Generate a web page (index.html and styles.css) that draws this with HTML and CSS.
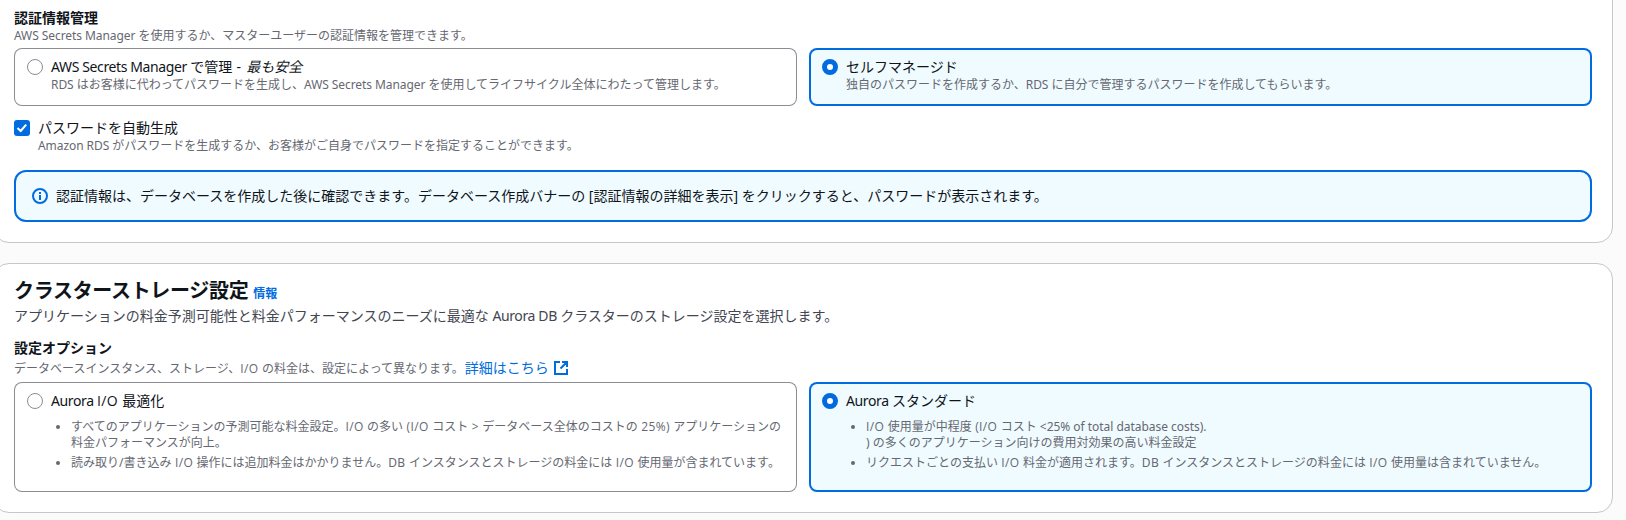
FILE: index.html
```
<!DOCTYPE html>
<html lang="ja">
<head>
<meta charset="utf-8">
<title>データベースの作成</title>
<link rel="stylesheet" href="styles.css">
</head>
<body>
<main class="page">
  <section class="container credentials">
    <div class="field-label">認証情報管理</div>
    <div class="field-desc"><span class="en">AWS Secrets Manager </span>を使用するか、マスターユーザーの認証情報を管理できます。</div>
    <div class="tiles">
      <div class="tile">
        <span class="radio"></span>
        <div class="tile-body">
          <div class="tile-title"><span class="en">AWS Secrets Manager </span>で管理<span class="dash"> - </span><i>最も安全</i></div>
          <div class="tile-desc"><span class="en">RDS </span>はお客様に代わってパスワードを生成し、<span class="en">AWS Secrets Manager </span>を使用してライフサイクル全体にわたって管理します。</div>
        </div>
      </div>
      <div class="tile selected">
        <span class="radio"></span>
        <div class="tile-body">
          <div class="tile-title">セルフマネージド</div>
          <div class="tile-desc">独自のパスワードを作成するか、<span class="en">RDS </span>に自分で管理するパスワードを作成してもらいます。</div>
        </div>
      </div>
    </div>
    <div class="check-row">
      <span class="checkbox"><svg viewBox="0 0 16 16" width="16" height="16"><path d="M3.5 8 6.7 11 12.2 4.6" fill="none" stroke="#fff" stroke-width="2"/></svg></span>
      <div>
        <div class="tile-title">パスワードを自動生成</div>
        <div class="tile-desc"><span class="en">Amazon RDS </span>がパスワードを生成するか、お客様がご自身でパスワードを指定することができます。</div>
      </div>
    </div>
    <div class="alert">
      <svg class="icon" viewBox="0 0 16 16" width="16" height="16" fill="none" stroke="#006ce0" stroke-width="2"><circle cx="8" cy="8" r="7"/><path d="M8 7v5M8 4v2"/></svg>
      <span>認証情報は、データベースを作成した後に確認できます。データベース作成バナーの [認証情報の詳細を表示] をクリックすると、パスワードが表示されます。</span>
    </div>
  </section>

  <section class="container storage">
    <h2 class="heading">クラスターストレージ設定 <a class="info">情報</a></h2>
    <p class="heading-desc">アプリケーションの料金予測可能性と料金パフォーマンスのニーズに最適な <span class="en">Aurora DB </span>クラスターのストレージ設定を選択します。</p>
    <div class="field-label">設定オプション</div>
    <div class="field-desc with-link">データベースインスタンス、ストレージ、<span class="io">I/O </span>の料金は、設定によって異なります。<a class="link">詳細はこちら<svg class="ext" viewBox="0 0 16 16" width="16" height="16" fill="none" stroke="#006ce0" stroke-width="2"><path d="M7 2H2V14H14V9M9 2H14V7M14 2 7.5 8.5"/></svg></a></div>
    <div class="tiles tall">
      <div class="tile">
        <span class="radio"></span>
        <div class="tile-body">
          <div class="tile-title"><span class="en">Aurora </span><span class="io">I/O </span>最適化</div>
          <ul class="bullets">
            <li>すべてのアプリケーションの予測可能な料金設定。<span class="io">I/O </span>の多い<span class="io"> (I/O </span>コスト<span class="io"> &gt; </span>データベース全体のコストの<span class="io"> 25%) </span>アプリケーションの<br>料金パフォーマンスが向上。</li>
            <li>読み取り/書き込み<span class="io"> I/O </span>操作には追加料金はかかりません。<span class="en">DB </span>インスタンスとストレージの料金には<span class="io"> I/O </span>使用量が含まれています。</li>
          </ul>
        </div>
      </div>
      <div class="tile selected">
        <span class="radio"></span>
        <div class="tile-body">
          <div class="tile-title"><span class="en">Aurora </span>スタンダード</div>
          <ul class="bullets">
            <li><span class="io">I/O </span>使用量が中程度<span class="io"> (I/O </span>コスト <span class="wide">&lt;25% of total database costs).</span><br>) の多くのアプリケーション向けの費用対効果の高い料金設定</li>
            <li>リクエストごとの支払い<span class="io"> I/O </span>料金が適用されます。<span class="en">DB </span>インスタンスとストレージの料金には<span class="io"> I/O </span>使用量は含まれていません。</li>
          </ul>
        </div>
      </div>
    </div>
  </section>
</main>
</body>
</html>
```
FILE: styles.css
```
* { box-sizing: border-box; }

body {
  margin: 0;
  height: 520px;
  overflow: hidden;
  background: #fbfbfb;
  color: #0f141a;
  font: 14px/20px "Noto Sans", "Noto Sans CJK JP", sans-serif;
}

.page {
  display: flex;
  flex-direction: column;
  gap: 20px;
  width: 1620px;
  margin-left: -7px;
}

.container {
  background: #fff;
  border: 1px solid #c6c6cd;
  border-radius: 16px;
  padding: 0 20px;
}

.credentials {
  height: 263px;
  margin-top: -20px;
  padding-top: 27px;
}

.storage {
  height: 250px;
  padding-top: 15px;
}

.en { letter-spacing: -0.027em; }

.field-desc .en,
.tile-desc .en { letter-spacing: -0.006em; }

.bullets .en { letter-spacing: 0.03em; }

.io {
  font-family: "Open Sans", "Noto Sans CJK JP", sans-serif;
  letter-spacing: 0.03em;
}

.wide { letter-spacing: -0.003em; }

.dash { letter-spacing: 0.05em; }

.field-label { font-weight: 700; }

.field-desc,
.tile-desc {
  color: #656871;
  font-size: 12px;
  line-height: 16px;
  white-space: nowrap;
}

.with-link { line-height: 20px; height: 20px; }

.tiles {
  display: grid;
  grid-template-columns: 1fr 1fr;
  gap: 12px;
  height: 58px;
  margin-top: 4px;
}

.tiles.tall { height: 110px; }

.tile {
  display: flex;
  gap: 8px;
  padding: 9px 13px;
  border-radius: 8px;
  box-shadow: inset 0 0 0 1px #8c8c94;
}

.tile.selected {
  background: #f0fbff;
  box-shadow: inset 0 0 0 2px #006ce0;
}

.radio {
  flex: none;
  width: 16px;
  height: 16px;
  margin-top: 2px;
  border: 1px solid #8c8c94;
  border-radius: 50%;
  background: #fff;
}

.selected .radio { border: 5px solid #006ce0; }

.tile-title { white-space: nowrap; }

.check-row {
  display: flex;
  gap: 8px;
  margin-top: 12px;
}

.checkbox {
  width: 16px;
  height: 16px;
  margin-top: 2px;
  border-radius: 3px;
  background: #006ce0;
}

.checkbox svg { display: block; }

.alert {
  display: flex;
  align-items: center;
  gap: 8px;
  height: 52px;
  margin-top: 16px;
  padding: 0 16px;
  border: 2px solid #006ce0;
  border-radius: 12px;
  background: #f0fbff;
  white-space: nowrap;
}

.heading {
  margin: 0;
  font-size: 20px;
  line-height: 24px;
  letter-spacing: -0.016em;
}

.info {
  color: #006ce0;
  font-size: 12px;
  letter-spacing: 0;
}

.heading-desc {
  margin: 0 0 12px;
  color: #424650;
}

.link {
  margin-left: 1px;
  color: #006ce0;
  font-size: 14px;
}

.ext {
  margin-left: 4px;
  vertical-align: -3px;
}

.bullets {
  margin: 8px 0 0;
  padding-left: 20px;
  color: #656871;
  font-size: 12px;
  line-height: 16px;
  white-space: nowrap;
}

.bullets li + li { margin-top: 4px; }
```
